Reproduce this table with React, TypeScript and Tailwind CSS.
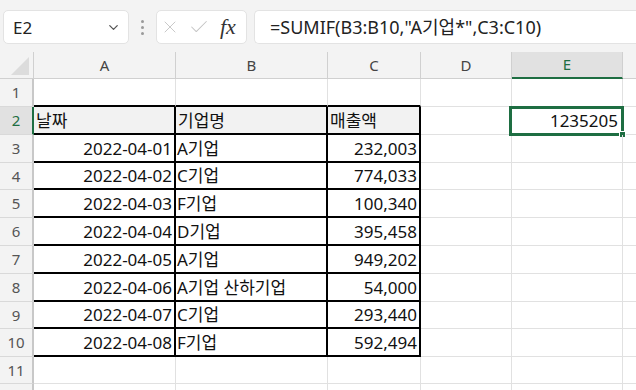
import { ChevronDown, X, Check } from "lucide-react";

const cols = ["A", "B", "C", "D", "E"];

const data = [
  ["2022-04-01", "A기업", "232,003"],
  ["2022-04-02", "C기업", "774,033"],
  ["2022-04-03", "F기업", "100,340"],
  ["2022-04-04", "D기업", "395,458"],
  ["2022-04-05", "A기업", "949,202"],
  ["2022-04-06", "A기업 산하기업", "54,000"],
  ["2022-04-07", "C기업", "293,440"],
  ["2022-04-08", "F기업", "592,494"],
];

// row heights as excel renders them at this zoom
const rowH = ["h-[28px]", "h-[28px]", "h-[28px]", "h-[27px]", "h-[28px]", "h-[28px]", "h-[28px]", "h-[28px]", "h-[27px]", "h-[28px]", "h-[27px]", "h-[28px]"];

const gridCols = "grid grid-cols-[34px_142px_152px_93px_91px_111px_1fr]";
const font = "font-['Noto_Sans','Noto_Sans_CJK_KR',sans-serif]";

function Toolbar() {
  return (
    <div className="h-[52px] bg-[#f3f3f3] flex items-start pt-[10px] pl-[3px] gap-0">
      <div className="w-[126px] h-[34px] bg-white border border-[#e3e3e3] rounded-[5px] flex items-center justify-between pl-[9px] pr-[7px]">
        <span className="text-[17px] text-[#222] leading-none">E2</span>
        <ChevronDown size={15} strokeWidth={2} className="text-[#555]" />
      </div>
      <div className="w-[27px] h-[34px] flex flex-col items-center justify-center gap-[3px]">
        <span className="w-[3px] h-[3px] bg-[#9a9a9a] rounded-full" />
        <span className="w-[3px] h-[3px] bg-[#9a9a9a] rounded-full" />
        <span className="w-[3px] h-[3px] bg-[#9a9a9a] rounded-full" />
      </div>
      <div className="w-[91px] h-[34px] bg-white border border-[#e3e3e3] rounded-[5px] flex items-center pl-[3px] gap-[8px]">
        <X size={20} strokeWidth={1.1} className="text-[#c4c4c4]" />
        <Check size={22} strokeWidth={1.1} className="text-[#c4c4c4]" />
        <span className="font-['Liberation_Serif',serif] italic text-[22px] text-[#333] leading-none ml-[2px]">fx</span>
      </div>
      <div className="ml-[7px] flex-1 h-[34px] bg-white border border-r-0 border-[#e3e3e3] rounded-l-[5px] flex items-center pl-[15px]">
        <span className="text-[18px] text-[#222] leading-none">=SUMIF(B3:B10,"A기업*",C3:C10)</span>
      </div>
    </div>
  );
}

function Header() {
  return (
    <div className={`${gridCols} h-[27px] bg-[#f3f3f3]`}>
      <div className="relative border-r border-b border-[#d0d0d0]">
        <div className="absolute right-[4px] bottom-[3px] w-0 h-0 border-l-[18px] border-l-transparent border-b-[18px] border-b-[#dcdcdc]" />
      </div>
      {cols.map((c) =>
        c === "E" ? (
          <div key={c} className="flex items-center justify-center bg-[#e1e1e1] border-r border-[#d0d0d0] border-b-2 border-b-[#1e6e42] text-[15px] text-[#1e6e42] leading-none">
            {c}
          </div>
        ) : (
          <div key={c} className="flex items-center justify-center border-r border-b border-[#d0d0d0] text-[15px] text-[#444] leading-none">
            {c}
          </div>
        )
      )}
      <div className="border-b border-[#d0d0d0]" />
    </div>
  );
}

function RowHead({ n }: { n: number }) {
  if (n === 2)
    return (
      <div className="flex items-center justify-center bg-[#e1e1e1] border-r-2 border-r-[#1e6e42] border-b border-b-[#d9d9d9] text-[15px] text-[#1e6e42] leading-none">
        {n}
      </div>
    );
  return (
    <div className="flex items-center justify-center bg-[#f3f3f3] border-r-2 border-r-[#c8c8c8] border-b border-b-[#d9d9d9] text-[15px] text-[#555] leading-none">
      {n < 12 ? n : null}
    </div>
  );
}

export default function App() {
  const headers = ["날짜", "기업명", "매출액"];
  return (
    <div className={`w-[636px] h-[390px] overflow-hidden bg-white ${font}`}>
      <Toolbar />
      <Header />
      {rowH.map((h, i) => {
        const n = i + 1;
        const inTable = n >= 2 && n <= 10;
        const row = n >= 3 && n <= 10 ? data[n - 3] : null;
        const gray = "border-r border-b border-[#e1e1e1]";
        const black = "border-r-2 border-b-2 border-black";
        return (
          <div key={n} className={`${gridCols} ${h}`}>
            <RowHead n={n} />
            {[0, 1, 2].map((ci) => {
              let cls = gray;
              if (inTable) cls = black;
              else if (n === 1) cls = "border-r border-r-[#e1e1e1] border-b-2 border-b-black";
              let content: React.ReactNode = null;
              if (n === 2)
                content = <span className="pl-[2px]">{headers[ci]}</span>;
              else if (row)
                content = ci === 1 ? <span className="pl-[1px]">{row[1]}</span> : <span className="ml-auto pr-[2px]">{row[ci]}</span>;
              return (
                <div key={ci} className={`${cls} ${n === 2 ? "bg-[#f2f2f2]" : ""} flex items-center text-[17px] text-[#111] leading-none whitespace-nowrap`}>
                  {content}
                </div>
              );
            })}
            <div className={`${n === 2 ? "border-r-0" : "border-r"} border-b border-[#e1e1e1]`} />
            <div className="relative border-r border-b border-[#e1e1e1] flex items-center">
              {n === 2 && (
                <>
                  <span className="ml-auto pr-[4px] text-[17px] text-[#111] leading-none">1235205</span>
                  <div className="absolute -left-[3px] -top-[1px] -right-[2px] -bottom-[2px] border-[3px] border-[#1e6e42]" />
                  <div className="absolute -right-[4px] -bottom-[4px] w-[7px] h-[7px] bg-[#1e6e42] border border-white" />
                </>
              )}
            </div>
            <div className="border-b border-[#e1e1e1]" />
          </div>
        );
      })}
    </div>
  );
}
